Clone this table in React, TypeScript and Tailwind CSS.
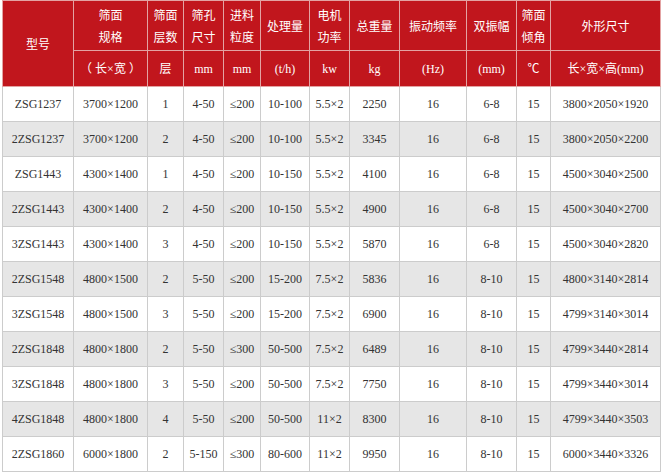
const COLS = [71, 74, 36, 40, 37, 49, 40, 50, 67, 50, 34, 110];

const HEAD_TOP: string[][] = [
  ['筛面', '规格'],
  ['筛面', '层数'],
  ['筛孔', '尺寸'],
  ['进料', '粒度'],
  ['处理量'],
  ['电机', '功率'],
  ['总重量'],
  ['振动频率'],
  ['双振幅'],
  ['筛面', '倾角'],
  ['外形尺寸'],
];

const HEAD_UNITS = ['（ 长×宽 ）', '层', 'mm', 'mm', '(t/h)', 'kw', 'kg', '(Hz)', '(mm)', '℃', '长×宽×高(mm)'];

const ROWS: string[][] = [
  ['ZSG1237', '3700×1200', '1', '4-50', '≤200', '10-100', '5.5×2', '2250', '16', '6-8', '15', '3800×2050×1920'],
  ['2ZSG1237', '3700×1200', '2', '4-50', '≤200', '10-100', '5.5×2', '3345', '16', '6-8', '15', '3800×2050×2200'],
  ['ZSG1443', '4300×1400', '1', '4-50', '≤200', '10-150', '5.5×2', '4100', '16', '6-8', '15', '4500×3040×2500'],
  ['2ZSG1443', '4300×1400', '2', '4-50', '≤200', '10-150', '5.5×2', '4900', '16', '6-8', '15', '4500×3040×2700'],
  ['3ZSG1443', '4300×1400', '3', '4-50', '≤200', '10-150', '5.5×2', '5870', '16', '6-8', '15', '4500×3040×2820'],
  ['2ZSG1548', '4800×1500', '2', '5-50', '≤200', '15-200', '7.5×2', '5836', '16', '8-10', '15', '4800×3140×2814'],
  ['3ZSG1548', '4800×1500', '3', '5-50', '≤200', '15-200', '7.5×2', '6900', '16', '8-10', '15', '4799×3140×3014'],
  ['2ZSG1848', '4800×1800', '2', '5-50', '≤300', '50-500', '7.5×2', '6489', '16', '8-10', '15', '4799×3440×2814'],
  ['3ZSG1848', '4800×1800', '3', '5-50', '≤200', '50-500', '7.5×2', '7750', '16', '8-10', '15', '4799×3440×3014'],
  ['4ZSG1848', '4800×1800', '4', '5-50', '≤200', '50-500', '11×2', '8300', '16', '8-10', '15', '4799×3440×3503'],
  ['2ZSG1860', '6000×1800', '2', '5-150', '≤300', '80-600', '11×2', '9950', '16', '8-10', '15', '6000×3440×3326'],
];

const FONT = "font-['Liberation_Serif','Noto_Sans_CJK_SC',serif]";
const CJK = "font-['Noto_Sans_CJK_SC','Liberation_Sans',sans-serif]";

export default function App() {
  return (
    <div className="h-[473px] w-[666px] bg-white pl-[2px]">
      <table className={`w-[658px] table-fixed border-collapse text-center ${FONT}`}>
        <colgroup>
          {COLS.map((w, i) => (
            <col key={i} style={{ width: w }} />
          ))}
        </colgroup>
        <thead className="bg-[#c1161d] text-white">
          <tr className="h-[50px]">
            <th
              rowSpan={2}
              className={`border border-[#e3a3a3] text-[12px] font-normal ${CJK}`}
            >
              型号
            </th>
            {HEAD_TOP.map((lines, i) => (
              <th
                key={i}
                className={`border border-[#e3a3a3] p-0 text-[12px] font-normal leading-[22px] ${CJK}`}
              >
                {lines.map((l) => (
                  <div key={l}>{l}</div>
                ))}
              </th>
            ))}
          </tr>
          <tr className="h-[36px]">
            {HEAD_UNITS.map((u, i) => (
              <th
                key={i}
                className="whitespace-nowrap border border-[#e3a3a3] p-0 text-[12px] font-normal"
              >
                {u}
              </th>
            ))}
          </tr>
        </thead>
        <tbody className="text-[12px] text-[#333333]">
          {ROWS.map((r, ri) => (
            <tr key={ri} className={`h-[35px] ${ri % 2 === 1 ? 'bg-[#e6e6e6]' : 'bg-white'}`}>
              {r.map((c, ci) => (
                <td key={ci} className="whitespace-nowrap border border-[#cccccc] p-0">
                  {c}
                </td>
              ))}
            </tr>
          ))}
        </tbody>
      </table>
    </div>
  );
}
